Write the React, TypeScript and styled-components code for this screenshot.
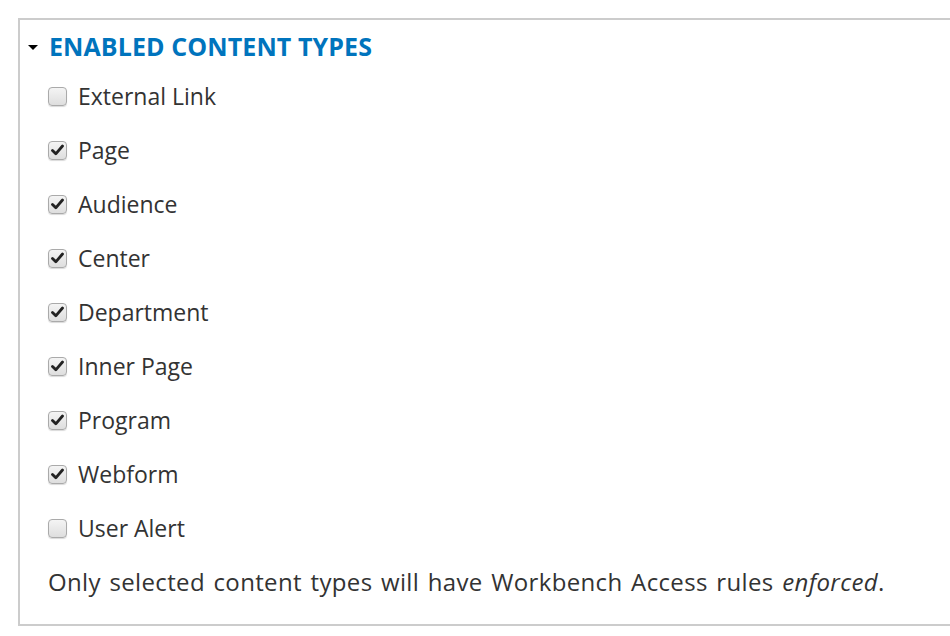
import React, { useState } from 'react';
import styled, { createGlobalStyle } from 'styled-components';

const GlobalStyle = createGlobalStyle`
  html, body {
    margin: 0;
    padding: 0;
    background: #fff;
    overflow: hidden;
  }
  body {
    font-family: 'Open Sans', 'DejaVu Sans', sans-serif;
    color: #333;
  }
`;

const Fieldset = styled.section`
  box-sizing: border-box;
  margin: 18px 0 0 18px;
  width: 932px;
  height: 608px;
  border: 2px solid #ccc;
  border-right: none;
  padding: 12px 0 0 8px;
  display: flex;
  flex-direction: column;
`;

const Summary = styled.div`
  display: flex;
  align-items: center;
  height: 28px;
  margin-bottom: 9px;
  cursor: pointer;
`;

const Arrow = styled.span`
  width: 0;
  height: 0;
  border-left: 5px solid transparent;
  border-right: 5px solid transparent;
  border-top: 5px solid #000;
  margin: 2px 11px 0 0;
`;

const Title = styled.h2`
  margin: 0;
  font-size: 25px;
  font-weight: 700;
  color: #0074bd;
  letter-spacing: 0.1px;
  text-transform: uppercase;
`;

const List = styled.div`
  display: flex;
  flex-direction: column;
  padding-left: 20px;
`;

const Row = styled.label`
  display: flex;
  align-items: center;
  height: 54px;
  font-size: 23px;
  cursor: pointer;
`;

const Box = styled.span<{ checked: boolean }>`
  box-sizing: border-box;
  width: 19px;
  height: 19px;
  margin-right: 11px;
  border: 1px solid #aaa;
  border-radius: 4px;
  background: linear-gradient(#f4f4f4, #dedede);
  box-shadow: 0 1px 1px rgba(0, 0, 0, 0.15);
  display: flex;
  align-items: center;
  justify-content: center;
`;

const Description = styled.div`
  display: flex;
  align-items: center;
  height: 52px;
  font-size: 24px;
  letter-spacing: 0.35px;
  word-spacing: 2px;
  color: #333;
  white-space: pre;
`;

const Check = () => (
  <svg width="13" height="12" viewBox="0 0 13 12">
    <path d="M1.5 6.5 L4.8 9.8 L11.5 2" fill="none" stroke="#222" strokeWidth="2.8" strokeLinecap="round" strokeLinejoin="round" />
  </svg>
);

const initial = [
  { name: 'External Link', checked: false },
  { name: 'Page', checked: true },
  { name: 'Audience', checked: true },
  { name: 'Center', checked: true },
  { name: 'Department', checked: true },
  { name: 'Inner Page', checked: true },
  { name: 'Program', checked: true },
  { name: 'Webform', checked: true },
  { name: 'User Alert', checked: false },
];

const App: React.FC = () => {
  const [types, setTypes] = useState(initial);

  const toggle = (i: number) =>
    setTypes(prev => prev.map((t, j) => (j === i ? { ...t, checked: !t.checked } : t)));

  return (
    <>
      <GlobalStyle />
      <Fieldset>
        <Summary>
          <Arrow />
          <Title>Enabled content types</Title>
        </Summary>
        <List>
          {types.map((t, i) => (
            <Row key={t.name} onClick={() => toggle(i)}>
              <Box checked={t.checked}>{t.checked && <Check />}</Box>
              {t.name}
            </Row>
          ))}
          <Description>
            Only selected content types will have Workbench Access rules <em>enforced</em>.
          </Description>
        </List>
      </Fieldset>
    </>
  );
};

export default App;
